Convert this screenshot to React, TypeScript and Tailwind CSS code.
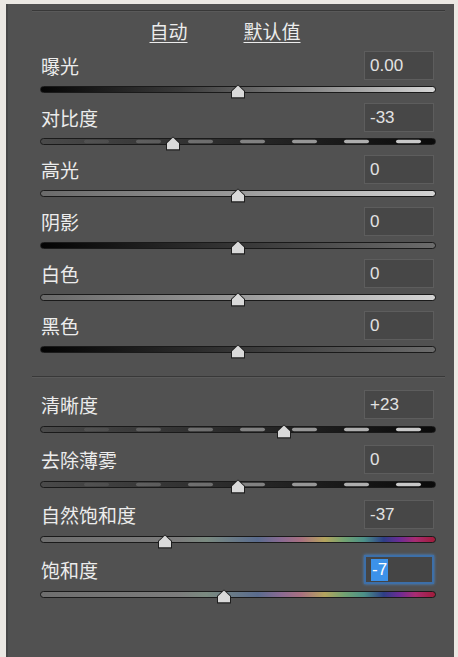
import React from 'react';

type Kind = 'dark' | 'light' | 'bw' | 'dash' | 'rainbow';

const top: { label: string; value: string; v: number; kind: Kind }[] = [
    { label: '曝光', value: '0.00', v: 0, kind: 'bw' },
    { label: '对比度', value: '-33', v: -33, kind: 'dash' },
    { label: '高光', value: '0', v: 0, kind: 'light' },
    { label: '阴影', value: '0', v: 0, kind: 'dark' },
    { label: '白色', value: '0', v: 0, kind: 'light' },
    { label: '黑色', value: '0', v: 0, kind: 'dark' },
];

const bottom: { label: string; value: string; v: number; kind: Kind; selected?: boolean }[] = [
    { label: '清晰度', value: '+23', v: 23, kind: 'dash' },
    { label: '去除薄雾', value: '0', v: 0, kind: 'dash' },
    { label: '自然饱和度', value: '-37', v: -37, kind: 'rainbow' },
    { label: '饱和度', value: '-7', v: -7, kind: 'rainbow', selected: true },
];

const fills: Record<Kind, string> = {
    bw: 'bg-[linear-gradient(to_right,#050505,#3a3a3a_35%,#8a8a8a_70%,#d6d6d6)]',
    light: 'bg-[linear-gradient(to_right,#6a6a6a,#9a9a9a_50%,#d4d4d4)]',
    dark: 'bg-[linear-gradient(to_right,#030303,#3c3c3c_55%,#6c6c6c)]',
    dash: 'bg-[linear-gradient(to_right,#4a4a4a,#303030_40%,#0a0a0a)]',
    rainbow:
        'bg-[linear-gradient(to_right,#6e6e6e,#7c7c7c_35%,#7a8a80_42%,#5a6c8e_55%,#8a6a92_61%,#a87080_66%,#b4a45e_72%,#72a272_77%,#4c9088_82%,#2e3e86_87%,#6c2c94_91%,#a82c72_95%,#a01c3a)]',
};

function Dashes() {
    // light dashes that grow brighter toward the right
    const items = [0, 1, 2, 3, 4, 5, 6];
    return (
        <svg className="absolute inset-0" width="100%" height="100%" viewBox="0 0 394 6" preserveAspectRatio="none">
            {items.map((i) => (
                <rect
                    key={i}
                    x={43 + i * 52}
                    y={1}
                    width={25}
                    height={4}
                    rx={2}
                    fill="#d4d4d4"
                    opacity={0.1 + i * 0.14}
                />
            ))}
        </svg>
    );
}

function Thumb({ v }: { v: number }) {
    const pct = (v + 100) / 200;
    return (
        <div className="absolute top-[-2px] -ml-[8px]" style={{ left: `${pct * 100}%` }}>
            <svg width="16" height="15" viewBox="0 0 16 15">
                <path d="M8 0.5 L15 7 L15 14.5 L1 14.5 L1 7 Z" fill="#1e1e1e" />
                <path d="M8 1.5 L14 7.2 L14 13.2 L2 13.2 L2 7.2 Z" fill="#d9d9d9" />
            </svg>
        </div>
    );
}

function Slider({ v, kind, pad }: { v: number; kind: Kind; pad: string }) {
    return (
        <div className={pad}>
            <div className="relative h-[7px]">
                <div className={`relative h-[7px] rounded-full border border-[#1a1a1a] overflow-hidden ${fills[kind]}`}>
                    {kind === 'dash' && <Dashes />}
                </div>
                <Thumb v={v} />
            </div>
        </div>
    );
}

function Row({ label, value, selected }: { label: string; value: string; selected?: boolean }) {
    return (
        <div className="flex items-center justify-between h-[29px] pr-[2px]">
            <span className="text-[19px] text-[#ececec] leading-none pl-[1px]">{label}</span>
            <div
                className={`w-[70px] h-[29px] flex items-center pl-[5px] text-[17px] font-['Liberation_Sans',sans-serif] ${
                    selected
                        ? 'bg-[#454545] border-2 border-[#3d6fa8] shadow-[0_0_3px_#4a8ad0]'
                        : 'bg-[#474747] border border-[#5d5d5d]'
                }`}
            >
                {selected ? (
                    <span className="bg-[#3c92ea] text-white px-[1px] leading-[22px]">{value}</span>
                ) : (
                    <span className="text-[#e2e2e2]">{value}</span>
                )}
            </div>
        </div>
    );
}

export default function App() {
    return (
        <div
            className="w-[458px] h-[657px] bg-[#ebe8e3] pt-[4px] pl-[6px] pr-[4px] overflow-hidden"
            style={{ fontFamily: '"Noto Sans CJK SC", "Liberation Sans", sans-serif' }}
        >
            <div className="h-[660px] bg-[#515151] border-l-2 border-[#464646] flex flex-col">
                {/* top rule */}
                <div className="mt-[6px] ml-[24px] mr-[9px] h-[2px] bg-[#383838] border-b border-[#5a5a5a]" />

                {/* auto / default */}
                <div className="h-[39px] flex items-center justify-center gap-[56px] text-[19px] text-[#ececec] pb-[1px]">
                    <span className="underline underline-offset-[3px] ml-[-12px]">自动</span>
                    <span className="underline underline-offset-[3px]">默认值</span>
                </div>

                <div className="pl-[32px] pr-[18px]">
                    {top.map((r) => (
                        <div key={r.label} className="h-[52px]">
                            <Row label={r.label} value={r.value} />
                            <Slider v={r.v} kind={r.kind} pad="pt-[6px]" />
                        </div>
                    ))}
                </div>

                {/* divider */}
                <div className="mt-[13px] ml-[24px] mr-[9px] h-[2px] bg-[#383838] border-b border-[#5a5a5a]" />

                <div className="pl-[32px] pr-[18px] pt-[12px]">
                    {bottom.map((r) => (
                        <div key={r.label} className="h-[55px]">
                            <Row label={r.label} value={r.value} selected={r.selected} />
                            <Slider v={r.v} kind={r.kind} pad="pt-[7px]" />
                        </div>
                    ))}
                </div>
            </div>
        </div>
    );
}
